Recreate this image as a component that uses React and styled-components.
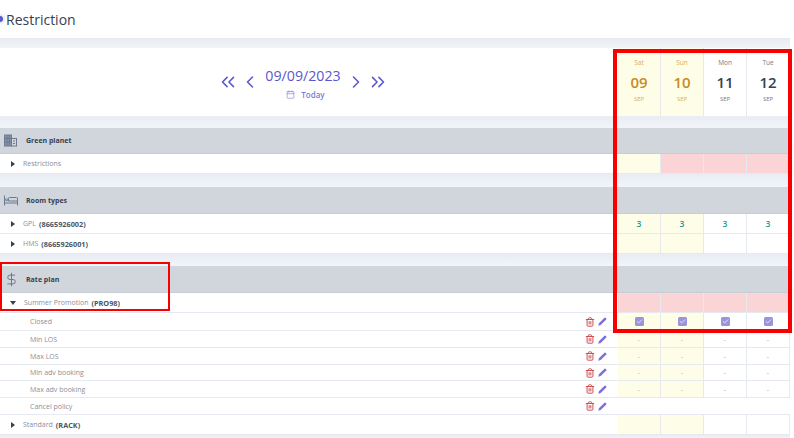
import React from 'react'
import styled, { createGlobalStyle } from 'styled-components'
import { ChevronsLeft, ChevronLeft, ChevronRight, ChevronsRight, Calendar, DollarSign, Trash2, Check } from 'lucide-react'

const Global = createGlobalStyle`
  html, body { margin: 0; padding: 0; background: #fff; }
  body { width: 794px; height: 438px; overflow: hidden; font-family: "Open Sans", "Noto Sans", sans-serif; }
`

const days = [
  { name: 'Sat', num: '09', weekend: true },
  { name: 'Sun', num: '10', weekend: true },
  { name: 'Mon', num: '11' },
  { name: 'Tue', num: '12' },
]

const Page = styled.div`
  position: relative;
  width: 794px;
  height: 438px;
  overflow: hidden;
`
const Content = styled.div`
  width: 790px;
`
const Header = styled.header`
  height: 39px;
  display: flex;
  align-items: center;
  gap: 3px;
  color: #374151;
  font-size: 14px;
  box-sizing: border-box;
  border-bottom: 1px solid #e6e9f0;
`
const BackDot = styled.span`
  width: 6px;
  height: 6px;
  margin-left: -3px;
  border-radius: 50%;
  background: #5b57d1;
  box-shadow: 0 0 4px rgba(0, 0, 0, 0.3);
`
const Strip = styled.div`
  height: ${p => p.$h}px;
  background: linear-gradient(#e9ecf2, #f1f4f8);
`
const Grid = styled.div`
  display: grid;
  grid-template-columns: 618px repeat(4, 43px);
  height: ${p => p.$h}px;
  box-sizing: border-box;
`
const NavCell = styled.div`
  display: flex;
  align-items: center;
  justify-content: center;
  padding-right: 12px;
  color: #5b57d1;
`
const NavBtn = styled.span`
  display: flex;
  margin-right: ${p => p.$after}px;
`
const DateBox = styled.div`
  display: flex;
  flex-direction: column;
  align-items: center;
  gap: 2px;
  margin: 2px 5px 0 5px;
`
const DateText = styled.div`
  font-size: 14.2px;
  line-height: 20px;
`
const Today = styled.div`
  display: flex;
  align-items: center;
  gap: 6px;
  height: 12px;
  margin-left: 5px;
  font-size: 8px;
  font-weight: 600;
  color: #7d7ad8;
`
const DayHead = styled.div`
  display: flex;
  flex-direction: column;
  align-items: center;
  padding-top: 10px;
  box-sizing: border-box;
  background: ${p => (p.$weekend ? '#fefee8' : '#fff')};
  border-right: 1px solid #e6e9f0;
  color: ${p => (p.$weekend ? '#c98a22' : '#374151')};
`
const DayName = styled.div`
  font-size: 6.5px;
  line-height: 9px;
  opacity: 0.7;
`
const DayNum = styled.div`
  font-size: 15px;
  font-weight: 600;
  line-height: 20px;
  margin-top: 5px;
`
const DayMonth = styled.div`
  font-size: 6px;
  line-height: 8px;
  margin-top: 3px;
  opacity: 0.7;
`
const Section = styled.div`
  height: ${p => p.$h}px;
  display: flex;
  align-items: center;
  background: #d1d5dc;
  color: #374151;
  font-size: 7px;
  font-weight: 700;
  border-bottom: 1px solid #c8ccd4;
  box-sizing: border-box;
`
const SectionIcon = styled.span`
  display: flex;
  width: 26px;
  padding-left: 4px;
  box-sizing: border-box;
  color: #6b7a90;
`
const Label = styled.div`
  display: flex;
  align-items: center;
  padding-left: ${p => p.$indent}px;
  font-size: 7px;
  color: #8a8f99;
  border-bottom: 1px solid #e6e9f0;
  b { color: #4b5563; margin-left: 3px; font-size: 7.3px; }
`
const Caret = styled.span`
  width: 0;
  height: 0;
  margin-right: 8px;
  ${p => (p.$open
    ? 'border-left: 3.5px solid transparent; border-right: 3.5px solid transparent; border-top: 4px solid #374151; margin-left: -1px;'
    : 'border-top: 3.5px solid transparent; border-bottom: 3.5px solid transparent; border-left: 4px solid #374151;')}
`
const Actions = styled.span`
  margin-left: auto;
  display: flex;
  align-items: center;
  gap: 3px;
  padding-right: 11px;
`
const Cell = styled.div`
  display: flex;
  align-items: center;
  justify-content: center;
  box-sizing: border-box;
  background: ${p => (p.$pink ? '#fbd5d6' : p.$weekend ? '#fefee8' : '#fff')};
  border-right: 1px solid #e6e9f0;
  border-bottom: 1px solid #e6e9f0;
  font-size: ${p => (p.$num ? 8.5 : 7)}px;
  font-weight: ${p => (p.$num ? 600 : 400)};
  color: ${p => (p.$num ? '#1a9a9e' : p.$weekend ? '#d8b060' : '#a6aab2')};
`
const Checkbox = styled.span`
  display: flex;
  align-items: center;
  justify-content: center;
  width: 9px;
  height: 9px;
  border-radius: 1.5px;
  background: #9a93de;
  color: #fff;
`
const Empty = styled.div`
  grid-column: span 4;
  border-bottom: 1px solid #e6e9f0;
`
const Highlight = styled.div`
  position: absolute;
  box-sizing: border-box;
  left: ${p => p.$x}px;
  top: ${p => p.$y}px;
  width: ${p => p.$w}px;
  height: ${p => p.$hh}px;
  border: ${p => p.$b}px solid #f80000;
  pointer-events: none;
`

function BuildingIcon() {
  return (
    <svg width="13" height="13" viewBox="0 0 13 13" fill="none" stroke="currentColor" strokeWidth="1">
      <rect x="0.5" y="1" width="7" height="11" fill="#8a96a8" />
      <rect x="7.5" y="4.5" width="5" height="7.5" />
      <path d="M0.5 4.5h7M0.5 8h7M3 1v11M5.3 1v11M9 7h2M9 9.5h2" />
    </svg>
  )
}

function BedIcon() {
  return (
    <svg width="14" height="11" viewBox="0 0 14 11" fill="none" stroke="currentColor" strokeWidth="1">
      <path d="M0.5 0.5v10M13.5 3v7.5M0.5 8h13M13.5 6h-9V3.5a1 1 0 0 1 1-1h7a1 1 0 0 1 1 1" />
      <circle cx="2.6" cy="4.8" r="1.1" />
    </svg>
  )
}

function PencilIcon() {
  return (
    <svg width="9" height="9" viewBox="0 0 9 9" fill="#7a70dc">
      <path d="M0.3 8.7 L0.9 6.3 L6.5 0.7 Q7 0.2 7.5 0.7 L8.3 1.5 Q8.8 2 8.3 2.5 L2.7 8.1 Z" />
    </svg>
  )
}

function RowActions() {
  return (
    <Actions>
      <Trash2 size={10} color="#cf4f54" strokeWidth={2.4} />
      <PencilIcon />
    </Actions>
  )
}

function Nav() {
  return (
    <NavCell>
      <NavBtn $after={1}><ChevronsLeft size={22} strokeWidth={1.7} /></NavBtn>
      <NavBtn $after={0}><ChevronLeft size={20} strokeWidth={1.9} /></NavBtn>
      <DateBox>
        <DateText>09/09/2023</DateText>
        <Today><Calendar size={9} strokeWidth={1.6} />Today</Today>
      </DateBox>
      <NavBtn $after={1}><ChevronRight size={20} strokeWidth={1.9} /></NavBtn>
      <NavBtn $after={0}><ChevronsRight size={22} strokeWidth={1.7} /></NavBtn>
    </NavCell>
  )
}

function SectionRow({ icon, title, h }) {
  return (
    <Section $h={h}>
      <SectionIcon>{icon}</SectionIcon>
      {title}
    </Section>
  )
}

function DataRow({ h, caret, open, name, code, cell }) {
  return (
    <Grid $h={h}>
      <Label $indent={11}>
        {caret && <Caret $open={open} />}
        {name}
        {code && <b>({code})</b>}
      </Label>
      {days.map((d, i) => cell(d, i))}
    </Grid>
  )
}

function SubRow({ h, name, cell }) {
  return (
    <Grid $h={h}>
      <Label $indent={30}>
        {name}
        <RowActions />
      </Label>
      {cell ? days.map((d, i) => cell(d, i)) : <Empty />}
    </Grid>
  )
}

const plain = d => <Cell key={d.name} $weekend={d.weekend} />
const three = d => <Cell key={d.name} $weekend={d.weekend} $num>3</Cell>
const pink = d => <Cell key={d.name} $pink />
const firstPlain = (d, i) => <Cell key={d.name} $weekend={d.weekend} $pink={i > 0} />
const dash = d => <Cell key={d.name} $weekend={d.weekend}>-</Cell>
const closed = d => (
  <Cell key={d.name} $weekend={d.weekend}>
    <Checkbox><Check size={7} strokeWidth={2.5} /></Checkbox>
  </Cell>
)

export default function App() {
  return (
    <Page>
      <Global />
      <Content>
        <Header><BackDot />Restriction</Header>
        <Strip $h={9} />
        <Grid $h={68}>
          <Nav />
          {days.map(d => (
            <DayHead key={d.name} $weekend={d.weekend}>
              <DayName>{d.name}</DayName>
              <DayNum>{d.num}</DayNum>
              <DayMonth>SEP</DayMonth>
            </DayHead>
          ))}
        </Grid>
        <Strip $h={12} />
        <SectionRow h={26} icon={<BuildingIcon />} title="Green planet" />
        <DataRow h={20} caret name="Restrictions" cell={firstPlain} />
        <Strip $h={13} />
        <SectionRow h={27} icon={<BedIcon />} title="Room types" />
        <DataRow h={20} caret name="GPL" code="8665926002" cell={three} />
        <DataRow h={20} caret name="HMS" code="8665926001" cell={plain} />
        <Strip $h={12} />
        <SectionRow h={27} icon={<DollarSign size={15} strokeWidth={1.6} />} title="Rate plan" />
        <DataRow h={20} caret open name="Summer Promotion" code="PRO98" cell={pink} />
        <SubRow h={18} name="Closed" cell={closed} />
        <SubRow h={17} name="Min LOS" cell={dash} />
        <SubRow h={17} name="Max LOS" cell={dash} />
        <SubRow h={16} name="Min adv booking" cell={dash} />
        <SubRow h={17} name="Max adv booking" cell={dash} />
        <SubRow h={17} name="Cancel policy" />
        <DataRow h={20} caret name="Standard" code="RACK" cell={plain} />
        <Strip $h={4} />
      </Content>
      <Highlight $x={613} $y={49} $w={179} $hh={284} $b={4} />
      <Highlight $x={0} $y={262} $w={170} $hh={49} $b={2} />
    </Page>
  )
}
